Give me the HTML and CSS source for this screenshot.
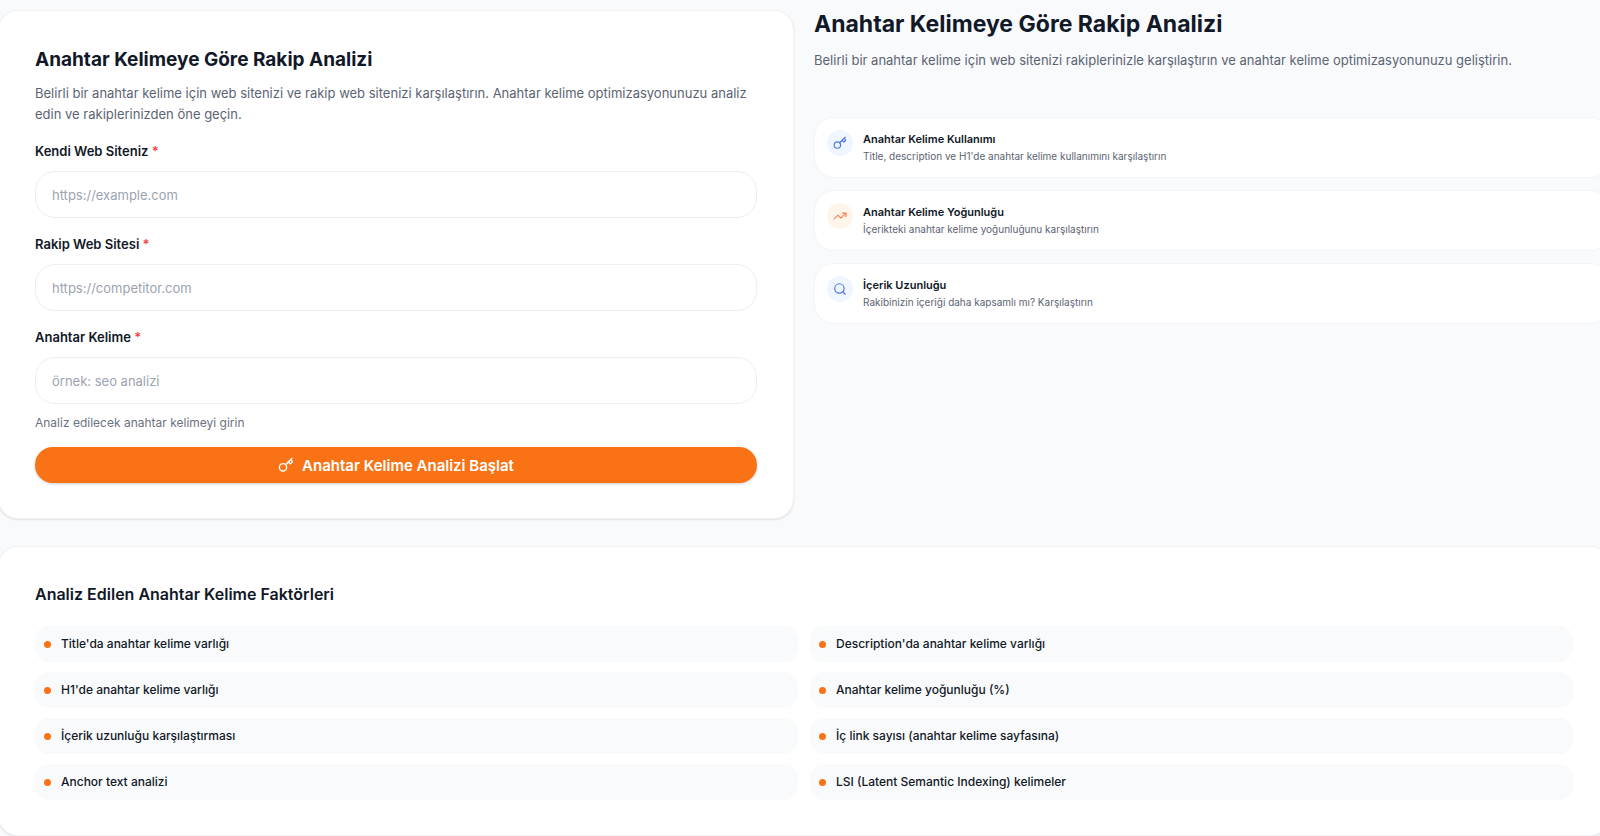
FILE: index.html
```
<!DOCTYPE html>
<html lang="tr">
<head>
<meta charset="utf-8">
<title>Anahtar Kelimeye Göre Rakip Analizi</title>
<link rel="stylesheet" href="styles.css">
</head>
<body>
<svg class="sprite" aria-hidden="true">
  <symbol id="key" viewBox="0 0 24 24">
    <circle cx="7.5" cy="15.5" r="5.5"/>
    <path d="m21 2-9.6 9.6"/>
    <path d="m15.5 7.5 2.3 2.3a1 1 0 0 0 1.4 0l2.1-2.1a1 1 0 0 0 0-1.4L19 4"/>
  </symbol>
  <symbol id="trend" viewBox="0 0 24 24">
    <path d="M22 7 13.5 15.5 8.5 10.5 2 17"/>
    <path d="M16 7h6v6"/>
  </symbol>
  <symbol id="search" viewBox="0 0 24 24">
    <circle cx="11" cy="11" r="8"/>
    <path d="m21 21-4.3-4.3"/>
  </symbol>
</svg>
<main class="page">
  <div class="top">
    <section class="card">
      <h2 class="card-title">Anahtar Kelimeye Göre Rakip Analizi</h2>
      <p class="lead">Belirli bir anahtar kelime için web sitenizi ve rakip web sitenizi karşılaştırın. Anahtar kelime optimizasyonunuzu analiz edin ve rakiplerinizden öne geçin.</p>
      <form class="form">
        <div class="field">
          <label class="label" for="own">Kendi Web Siteniz <span class="required">*</span></label>
          <input class="input" id="own" type="url" placeholder="https://example.com">
        </div>
        <div class="field">
          <label class="label" for="rival">Rakip Web Sitesi <span class="required">*</span></label>
          <input class="input" id="rival" type="url" placeholder="https://competitor.com">
        </div>
        <div class="field">
          <label class="label" for="keyword">Anahtar Kelime <span class="required">*</span></label>
          <input class="input" id="keyword" type="text" placeholder="örnek: seo analizi" aria-describedby="keyword-help">
          <p class="help" id="keyword-help">Analiz edilecek anahtar kelimeyi girin</p>
        </div>
        <button class="submit" type="button"><svg class="icon icon-md" aria-hidden="true"><use href="#key"/></svg>Anahtar Kelime Analizi Başlat</button>
      </form>
    </section>
    <section class="intro">
      <h1 class="intro-title">Anahtar Kelimeye Göre Rakip Analizi</h1>
      <p class="lead">Belirli bir anahtar kelime için web sitenizi rakiplerinizle karşılaştırın ve anahtar kelime optimizasyonunuzu geliştirin.</p>
      <div class="features">
        <article class="feature">
          <span class="badge badge-blue"><svg class="icon" aria-hidden="true"><use href="#key"/></svg></span>
          <div><h3 class="feature-title">Anahtar Kelime Kullanımı</h3><p class="feature-text">Title, description ve H1'de anahtar kelime kullanımını karşılaştırın</p></div>
        </article>
        <article class="feature">
          <span class="badge badge-orange"><svg class="icon" aria-hidden="true"><use href="#trend"/></svg></span>
          <div><h3 class="feature-title">Anahtar Kelime Yoğunluğu</h3><p class="feature-text">İçerikteki anahtar kelime yoğunluğunu karşılaştırın</p></div>
        </article>
        <article class="feature">
          <span class="badge badge-blue"><svg class="icon" aria-hidden="true"><use href="#search"/></svg></span>
          <div><h3 class="feature-title">İçerik Uzunluğu</h3><p class="feature-text">Rakibinizin içeriği daha kapsamlı mı? Karşılaştırın</p></div>
        </article>
      </div>
    </section>
  </div>
  <section class="card">
    <h2 class="factors-title">Analiz Edilen Anahtar Kelime Faktörleri</h2>
    <ul class="factors">
      <li class="factor">Title'da anahtar kelime varlığı</li>
      <li class="factor">Description'da anahtar kelime varlığı</li>
      <li class="factor">H1'de anahtar kelime varlığı</li>
      <li class="factor">Anahtar kelime yoğunluğu (%)</li>
      <li class="factor">İçerik uzunluğu karşılaştırması</li>
      <li class="factor">İç link sayısı (anahtar kelime sayfasına)</li>
      <li class="factor">Anchor text analizi</li>
      <li class="factor">LSI (Latent Semantic Indexing) kelimeler</li>
    </ul>
  </section>
</main>
</body>
</html>
```
FILE: styles.css
```
* { box-sizing: border-box; }
body {
  margin: 0;
  overflow: hidden;
  background: #f9fafc;
  color: #111827;
  font-family: Inter, "Liberation Sans", sans-serif;
}
h1, h2, h3, p, ul { margin: 0; padding: 0; }
.sprite { display: none; }
.page {
  display: flex;
  flex-direction: column;
  gap: 27px;
  margin: 0 -10px 0 -2px;
  padding-top: 10px;
}
.top {
  display: grid;
  grid-template-columns: 1fr 1fr;
  gap: 20px;
}
.card {
  padding: 35px 36px;
  border: 1px solid #f0f2f4;
  border-radius: 20px;
  background: #fff;
  box-shadow: 0 1px 2px rgba(0, 0, 0, 0.1);
}
.card-title {
  font-size: 19px;
  line-height: 28px;
  font-weight: 700;
}
.lead {
  margin-top: 9px;
  color: #5b6472;
  font-size: 13px;
  line-height: 21px;
}
.form {
  display: flex;
  flex-direction: column;
  gap: 16px;
  margin-top: 16px;
}
.field { display: flex; flex-direction: column; }
.label {
  margin-bottom: 10px;
  font-size: 13px;
  line-height: 20px;
  font-weight: 600;
}
.required { color: #ef4444; }
.input {
  width: 100%;
  height: 47px;
  padding: 0 16px;
  border: 1px solid #eceef1;
  border-radius: 20px;
  background: #fff;
  color: #111827;
  font: inherit;
  font-size: 13px;
}
.input::placeholder { color: #9ca3af; }
.help {
  margin-top: 10px;
  color: #6b7280;
  font-size: 12px;
  line-height: 17px;
}
.submit {
  display: flex;
  align-items: center;
  justify-content: center;
  gap: 8px;
  height: 36px;
  border: 0;
  border-radius: 18px;
  background: #f97316;
  color: #fff;
  font: inherit;
  font-size: 15px;
  font-weight: 600;
  box-shadow: 0 1px 3px rgba(0, 0, 0, 0.2);
}
.icon {
  width: 14px;
  height: 14px;
  fill: none;
  stroke: currentColor;
  stroke-width: 2;
  stroke-linecap: round;
  stroke-linejoin: round;
}
.icon-md { width: 16px; height: 16px; }
.intro-title {
  margin-bottom: 11px;
  font-size: 23px;
  line-height: 29px;
  font-weight: 700;
}
.intro .lead { margin-top: 0; }
.features {
  display: flex;
  flex-direction: column;
  gap: 12px;
  margin-top: 46px;
}
.feature {
  display: flex;
  gap: 10px;
  padding: 12px;
  border: 1px solid #f2f4f7;
  border-radius: 20px;
  background: #fff;
}
.badge {
  display: flex;
  flex: none;
  align-items: center;
  justify-content: center;
  width: 26px;
  height: 26px;
  border-radius: 50%;
}
.badge-blue { background: #eff6ff; color: #4f75e8; }
.badge-orange { background: #fff5eb; color: #f98050; }
.feature-title {
  font-size: 11px;
  line-height: 18px;
  font-weight: 600;
}
.feature-text {
  color: #5b6472;
  font-size: 10px;
  line-height: 17px;
}
.factors-title {
  font-size: 16px;
  line-height: 24px;
  font-weight: 600;
}
.factors {
  display: grid;
  grid-template-columns: 1fr 1fr;
  gap: 10px 12px;
  margin-top: 20px;
  list-style: none;
}
.factor {
  display: flex;
  align-items: center;
  gap: 10px;
  padding: 9px;
  border-radius: 14px;
  background: #f9fafb;
  font-size: 12px;
  line-height: 18px;
  font-weight: 500;
}
.factor::before {
  content: "";
  width: 7px;
  height: 7px;
  border-radius: 50%;
  background: #f97316;
}
```
